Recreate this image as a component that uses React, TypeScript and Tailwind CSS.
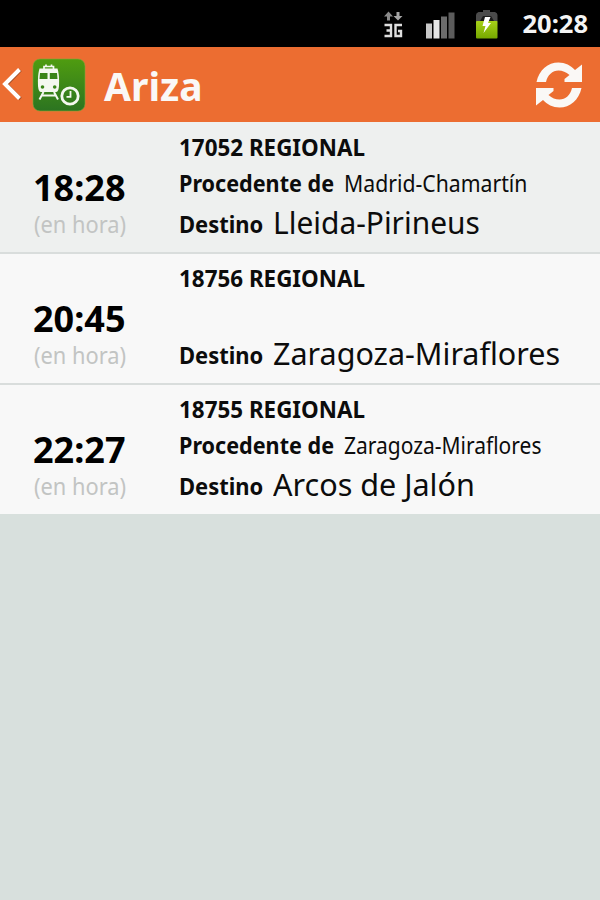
import React from "react";

type Train = {
  id: string;
  time: string;
  from?: string;
  to: string;
  fromScale?: string;
  toScale: string;
};

const trains: Train[] = [
  {
    id: "17052 REGIONAL",
    time: "18:28",
    from: "Madrid-Chamartín",
    to: "Lleida-Pirineus",
    fromScale: "scale-x-[0.922]",
    toScale: "scale-x-[0.965]",
  },
  {
    id: "18756 REGIONAL",
    time: "20:45",
    to: "Zaragoza-Miraflores",
    toScale: "scale-x-[0.984]",
  },
  {
    id: "18755 REGIONAL",
    time: "22:27",
    from: "Zaragoza-Miraflores",
    to: "Arcos de Jalón",
    fromScale: "scale-x-[0.912]",
    toScale: "scale-x-[0.985]",
  },
];

function StatusBar() {
  return (
    <div className="flex h-[47px] items-center bg-black pr-[12px]">
      <svg className="ml-[383px] h-[30px] w-[22px] shrink-0" viewBox="0 0 22 30">
        <path d="M5.500 2.500L1 7.500H4V11.500H7V7.500H10Z" fill="#8a8a8a" />
        <path d="M15 11.500L10.500 7H13.500V3H16.500V7H19.500Z" fill="#a5a5a5" />
        <path
          d="M1.500 16H8V27H1.500M3.500 21.500H8M19 16H12.500V27H18V22H15"
          fill="none"
          stroke="#dedede"
          strokeWidth="2.400"
        />
      </svg>
      <svg className="ml-[20px] h-[30px] w-[32px] shrink-0" viewBox="0 0 32 30">
        <rect x="1" y="14.500" width="6" height="15" fill="#c8c8c8" />
        <rect x="8.500" y="11" width="6" height="18.500" fill="#e6e6e6" />
        <rect x="16" y="7.500" width="6" height="22" fill="#6c6c6c" />
        <rect x="23.500" y="3.500" width="6" height="26" fill="#5c5c5c" />
      </svg>
      <svg className="ml-[18px] h-[32px] w-[24px] shrink-0" viewBox="0 0 24 32">
        <defs>
          <linearGradient id="charge" x1="0" y1="0" x2="0" y2="1">
            <stop offset="0" stopColor="#a6d018" />
            <stop offset="1" stopColor="#76a800" />
          </linearGradient>
        </defs>
        <path d="M8 2H15V4H20Q22.500 5 22.500 7V14H1V7Q1 5 3.500 4H8Z" fill="#4b4b4b" />
        <path d="M5 13L8 8H16L19 13Z" fill="#1c1c1c" />
        <rect x="1" y="13" width="21.500" height="17.500" rx="1" fill="url(#charge)" />
        <path d="M10 9H15.500L13 15H16L8.500 25L10.500 18H7.500Z" fill="#fff" />
      </svg>
      <span className="ml-auto pb-px text-[25.500px] leading-[46px] font-bold text-[#f4f4f4]">
        20:28
      </span>
    </div>
  );
}

function TrainIcon() {
  return (
    <svg className="ml-[10px] h-[54px] w-[54px] shrink-0" viewBox="0 0 54 54">
      <defs>
        <linearGradient id="tile" x1="0" y1="0" x2="0" y2="1">
          <stop offset="0" stopColor="#4f9c10" />
          <stop offset="1" stopColor="#2c7421" />
        </linearGradient>
      </defs>
      <rect x="1" y="1" width="52" height="52" rx="7" fill="url(#tile)" stroke="#7ea83a" strokeOpacity="0.6" />
      <path d="M12 11V8.500H21.500V11M14 8.500V6.500M19.500 8.500V6.500" fill="none" stroke="#f4f8f0" strokeWidth="1.700" />
      <path d="M7.500 10.500H25.500Q27.500 17 27 28Q26.500 34 24 34H9Q6.500 34 6 28Q5.500 17 7.500 10.500Z" fill="#f4f8f0" />
      <path d="M8 15H15.500V21H7.500ZM17.800 15H25L25.500 21H17.800Z" fill="#398417" />
      <circle cx="10.500" cy="29" r="1.800" fill="#398417" />
      <circle cx="22.700" cy="29" r="1.800" fill="#398417" />
      <path d="M11.500 34L7.500 41.500M22 34L26 41.500M10 37.500H23.500" stroke="#f4f8f0" strokeWidth="2" />
      <circle cx="38" cy="38" r="8.200" fill="none" stroke="#f4f8f0" strokeWidth="2.800" />
      <path d="M38.500 33V38.800H34.500" fill="none" stroke="#f4f8f0" strokeWidth="1.800" />
    </svg>
  );
}

function Header() {
  return (
    <header className="flex h-[75px] items-center bg-[#ec6d31]">
      <svg className="ml-[2px] h-[34px] w-[20px] shrink-0" viewBox="0 0 20 34">
        <path d="M18.500 2L4.500 16.500L18.500 31" fill="none" stroke="#a4502a" strokeWidth="3.500" />
        <path d="M17.500 1.500L3 16L17.500 30.500" fill="none" stroke="#fff" strokeWidth="4" />
      </svg>
      <TrainIcon />
      <h1 className="ml-[18px] pt-[2px] text-[39px] leading-[73px] font-bold text-[#faf8f6]">Ariza</h1>
      <svg className="mr-[17px] ml-auto h-[46px] w-[48px] shrink-0" viewBox="0 0 48 46">
        <path
          d="M1.500 20C4 8 13 0.500 23.500 0.500C30 0.500 36 3.500 40 8L47 2.500V20H29.500V17L34.500 13C31 10 27.500 8.500 23.500 8.500C17.500 8.500 12.500 13 11 20Z"
          fill="#faf8f6"
        />
        <path
          d="M1.500 20C4 8 13 0.500 23.500 0.500C30 0.500 36 3.500 40 8L47 2.500V20H29.500V17L34.500 13C31 10 27.500 8.500 23.500 8.500C17.500 8.500 12.500 13 11 20Z"
          fill="#faf8f6"
          transform="rotate(180 24 23)"
        />
      </svg>
    </header>
  );
}

function Row({ train, first }: { train: Train; first: boolean }) {
  return (
    <li
      className={`flex shrink-0 border-b-2 border-[#d9dddc] last:border-b-0 ${
        first ? "h-[132px] bg-[#eef0ef]" : "h-[131px] bg-[#f8f8f8] last:h-[129px]"
      }`}
    >
      <div className={`flex w-[179px] shrink-0 flex-col pl-[33px] ${first ? "pt-[43px]" : "pt-[42px]"}`}>
        <span className="text-[36px] leading-[46px] font-bold text-black">{train.time}</span>
        <span className="origin-left translate-x-px scale-x-[0.948] text-[23px] leading-[26px] text-[#c2c4c3]">
          (en hora)
        </span>
      </div>
      <div className={`flex flex-col whitespace-nowrap text-[#0c0c0c] ${first ? "pt-[9px]" : "pt-[8px]"}`}>
        <span className="h-[34px] origin-left self-start scale-x-[0.974] text-[23px] leading-[33px] font-bold">
          {train.id}
        </span>
        <div className="flex h-[36px] items-baseline text-[23px] leading-[36px]">
          {train.from && (
            <>
              <span className="w-[165px] shrink-0">
                <span className="inline-block origin-left scale-x-[0.938] font-bold">Procedente de</span>
              </span>
              <span className={`origin-left ${train.fromScale}`}>{train.from}</span>
            </>
          )}
        </div>
        <div className="flex h-[42px] items-baseline">
          <span className="w-[94px] shrink-0 text-[23px] leading-none">
            <span className="inline-block origin-left -translate-y-px scale-x-[0.955] font-bold">Destino</span>
          </span>
          <span className={`origin-left text-[31px] leading-[42px] ${train.toScale}`}>{train.to}</span>
        </div>
      </div>
    </li>
  );
}

export default function App() {
  return (
    <div className="flex h-[900px] w-[600px] flex-col overflow-hidden bg-[#d8e0dd] font-['Noto_Sans',sans-serif]">
      <StatusBar />
      <Header />
      <ul className="flex flex-col">
        {trains.map((train, i) => (
          <Row key={train.id} train={train} first={i === 0} />
        ))}
      </ul>
    </div>
  );
}
